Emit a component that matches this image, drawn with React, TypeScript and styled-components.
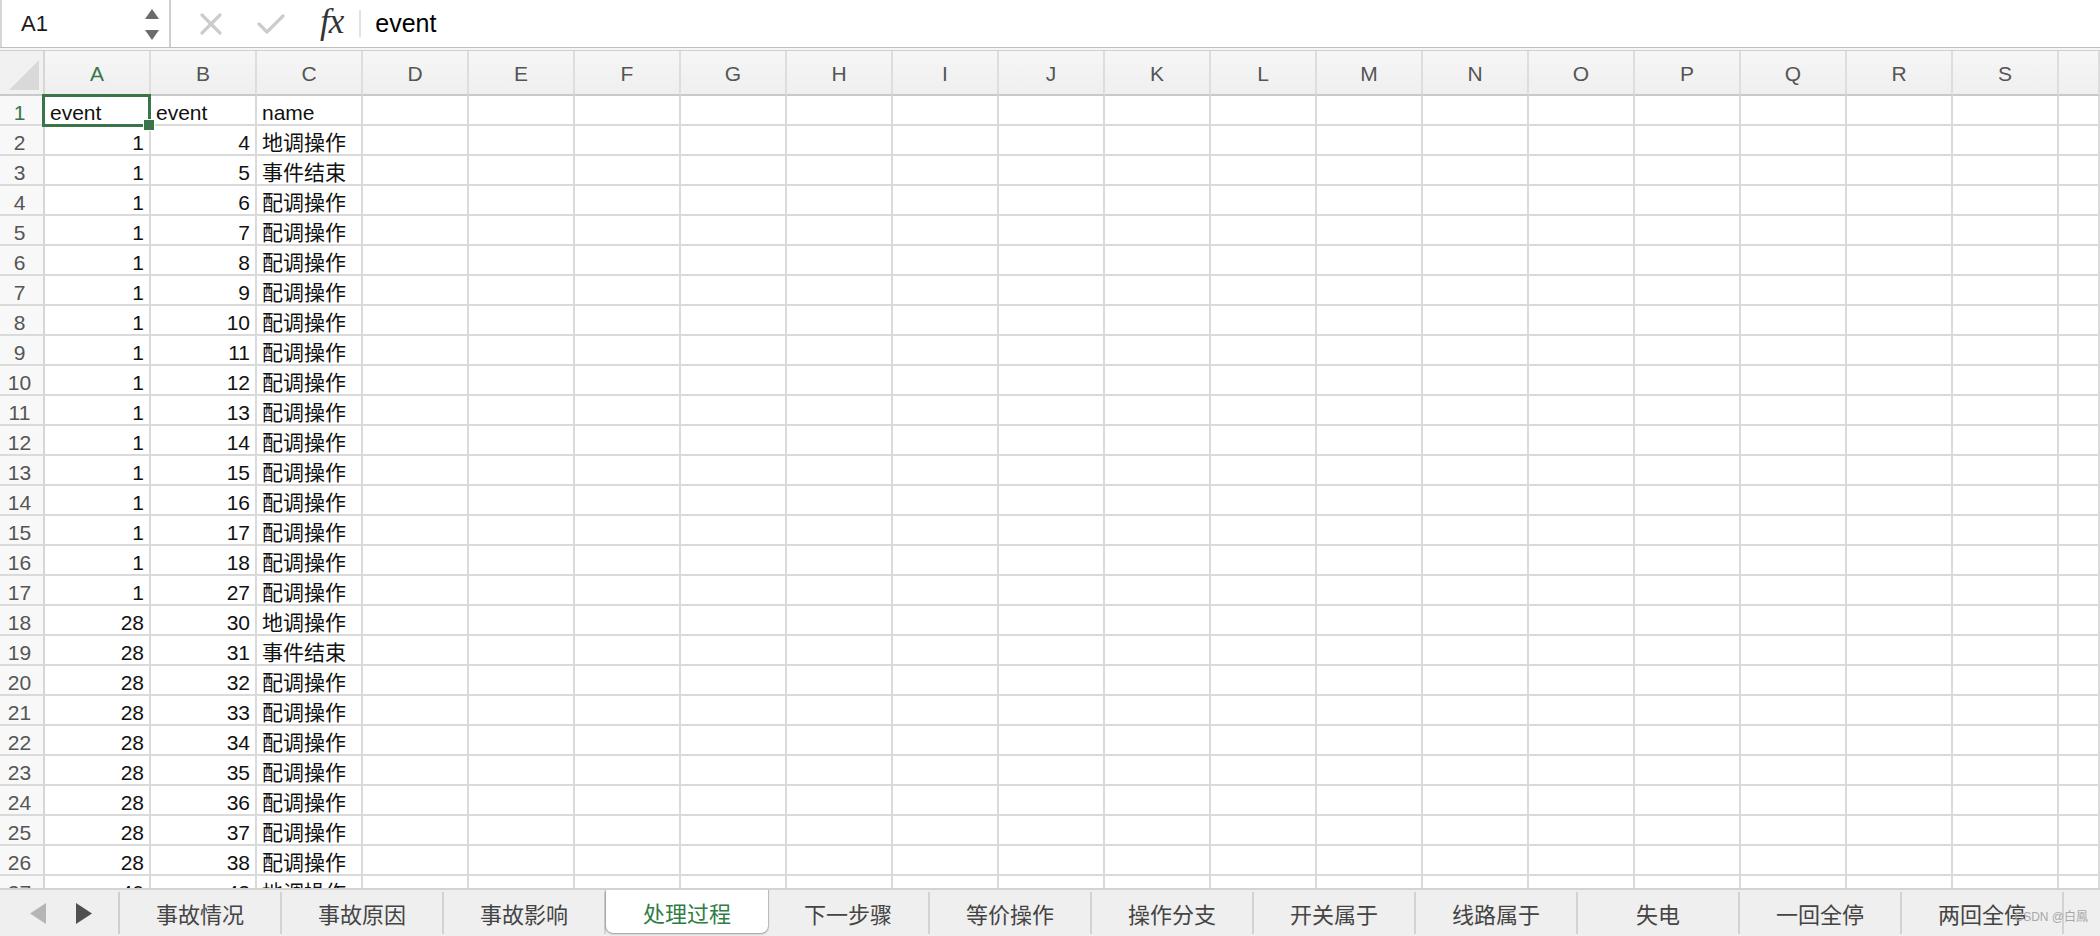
import React from 'react';
import styled, { createGlobalStyle } from 'styled-components';

const GlobalStyle = createGlobalStyle`
  html, body {
    margin: 0;
    padding: 0;
    background: #ffffff;
    overflow: hidden;
  }
  body {
    font-family: "Liberation Sans", "Noto Sans CJK SC", sans-serif;
    color: #111;
  }
`;

const GREEN = '#3a7549';
const GRID = '#dadada';

const Window = styled.div`
  display: flex;
  flex-direction: column;
  width: 2100px;
  height: 936px;
  overflow: hidden;
  position: relative;
`;

const Toolbar = styled.div`
  display: flex;
  align-items: center;
  height: 47px;
  border-bottom: 1px solid #bdbdbd;
  background: #ffffff;
  flex: none;
`;

const NameBox = styled.div`
  display: flex;
  align-items: center;
  justify-content: space-between;
  width: 171px;
  height: 100%;
  box-sizing: border-box;
  padding: 0 10px 0 19px;
  border-left: 2px solid #d6d6d6;
  border-right: 2px solid #cfcfcf;
  font-size: 22px;
  color: #1a1a1a;
`;

const Spinner = styled.div`
  display: flex;
  flex-direction: column;
  gap: 11px;
  margin-top: 2px;
`;

const FormulaIcons = styled.div`
  display: flex;
  align-items: center;
  height: 100%;
  padding-left: 29px;
  gap: 35px;
`;

const Fx = styled.span`
  font-family: "Liberation Serif", "DejaVu Serif", serif;
  font-style: italic;
  font-size: 35px;
  color: #333;
  letter-spacing: -1px;
  margin-top: -3px;
`;

const FormulaSep = styled.div`
  width: 2px;
  height: 27px;
  background: #e2e2e2;
  margin-left: 16px;
`;

const FormulaText = styled.div`
  padding-left: 14px;
  font-size: 25px;
  color: #000;
`;

const Band = styled.div`
  height: 2px;
  background: #f5f5f5;
  border-bottom: 1px solid #cfcfcf;
  flex: none;
`;

const Sheet = styled.div`
  flex: 1;
  overflow: hidden;
  display: flex;
  flex-direction: column;
`;

const Row = styled.div<{ $h: number }>`
  display: flex;
  flex: none;
  height: ${(p) => p.$h}px;
`;

const Corner = styled.div`
  width: 45px;
  flex: none;
  box-sizing: border-box;
  background: #f1f1f1;
  border-right: 2px solid #d6d6d6;
  border-bottom: 2px solid #c9c9c9;
  display: flex;
  align-items: flex-end;
  justify-content: flex-end;
  padding: 0 4px 4px 0;
`;

const ColHead = styled.div<{ $active?: boolean; $fill?: boolean }>`
  width: 106px;
  flex: ${(p) => (p.$fill ? '1' : 'none')};
  box-sizing: border-box;
  background: linear-gradient(#f6f6f6, #efefef);
  border-right: 2px solid #dddddd;
  border-bottom: 2px solid #c9c9c9;
  display: flex;
  align-items: center;
  justify-content: center;
  padding-top: 3px;
  font-size: 21px;
  color: ${(p) => (p.$active ? GREEN : '#555')};
`;

const RowHead = styled.div<{ $active?: boolean }>`
  width: 45px;
  flex: none;
  box-sizing: border-box;
  background: #f8f8f8;
  border-right: 2px solid #d6d6d6;
  border-bottom: 2px solid ${GRID};
  text-align: center;
  padding: 3px 4px 0 0;
  line-height: 28px;
  font-size: 21px;
  color: ${(p) => (p.$active ? GREEN : '#555')};
`;

const Cell = styled.div<{ $num?: boolean; $fill?: boolean }>`
  width: 106px;
  flex: ${(p) => (p.$fill ? '1' : 'none')};
  box-sizing: border-box;
  border-right: 2px solid ${GRID};
  border-bottom: 2px solid ${GRID};
  padding: 3px 5px 0 5px;
  line-height: 28px;
  font-size: 21px;
  text-align: ${(p) => (p.$num ? 'right' : 'left')};
  white-space: nowrap;
  color: #111;
`;

const SelectedCell = styled(Cell)`
  position: relative;
  &::before {
    content: '';
    position: absolute;
    left: -3px;
    top: -2px;
    right: -2px;
    bottom: -3px;
    border: 3px solid ${GREEN};
    pointer-events: none;
  }
  &::after {
    content: '';
    position: absolute;
    right: -6px;
    bottom: -7px;
    width: 10px;
    height: 10px;
    background: ${GREEN};
    border: 1px solid #fff;
  }
`;

const TabBar = styled.div`
  display: flex;
  align-items: flex-start;
  height: 48px;
  flex: none;
  box-sizing: border-box;
  background: #efefef;
  border-top: 2px solid #d3d3d3;
  overflow: hidden;
`;

const Nav = styled.div`
  display: flex;
  align-items: center;
  gap: 30px;
  width: 120px;
  height: 42px;
  margin-top: 2px;
  box-sizing: border-box;
  padding-left: 30px;
  border-right: 2px solid #cfcfcf;
  flex: none;
`;

const Tab = styled.div<{ $active?: boolean }>`
  width: 162px;
  flex: none;
  box-sizing: border-box;
  display: flex;
  align-items: center;
  justify-content: center;
  font-size: 22px;
  white-space: nowrap;
  font-family: "Noto Sans CJK SC", sans-serif;
  color: ${(p) => (p.$active ? '#2f7d45' : '#444')};
  ${(p) =>
    p.$active
      ? `
    height: 45px;
    margin-top: -2px;
    padding-top: 2px;
    background: #ffffff;
    border-radius: 0 0 7px 7px;
    box-shadow: 0 1px 2px rgba(0,0,0,0.35), 1px 0 1px rgba(0,0,0,0.15), -1px 0 1px rgba(0,0,0,0.15);
    position: relative;
    z-index: 1;
  `
      : `
    height: 42px;
    margin-top: 2px;
    border-right: 2px solid #d2d2d2;
  `}
`;

const Watermark = styled.div`
  position: absolute;
  right: 12px;
  bottom: 12px;
  font-size: 12px;
  color: #a8a8a8;
  font-family: "Liberation Sans", "Noto Sans CJK SC", sans-serif;
  z-index: 2;
`;

const LETTERS = 'ABCDEFGHIJKLMNOPQRS'.split('');

type Data = [number | string, number | string, string];

const DATA: Data[] = [
  ['event', 'event', 'name'],
  [1, 4, '地调操作'],
  [1, 5, '事件结束'],
  [1, 6, '配调操作'],
  [1, 7, '配调操作'],
  [1, 8, '配调操作'],
  [1, 9, '配调操作'],
  [1, 10, '配调操作'],
  [1, 11, '配调操作'],
  [1, 12, '配调操作'],
  [1, 13, '配调操作'],
  [1, 14, '配调操作'],
  [1, 15, '配调操作'],
  [1, 16, '配调操作'],
  [1, 17, '配调操作'],
  [1, 18, '配调操作'],
  [1, 27, '配调操作'],
  [28, 30, '地调操作'],
  [28, 31, '事件结束'],
  [28, 32, '配调操作'],
  [28, 33, '配调操作'],
  [28, 34, '配调操作'],
  [28, 35, '配调操作'],
  [28, 36, '配调操作'],
  [28, 37, '配调操作'],
  [28, 38, '配调操作'],
  [40, 42, '地调操作'],
];

const TABS = ['事故情况', '事故原因', '事故影响', '处理过程', '下一步骤', '等价操作', '操作分支', '开关属于', '线路属于', '失电', '一回全停', '两回全停'];

const Triangle: React.FC<{ up?: boolean }> = ({ up }) => (
  <svg width="14" height="10" viewBox="0 0 14 10">
    <polygon points={up ? '7,0 14,10 0,10' : '0,0 14,0 7,10'} fill="#6b6b6b" />
  </svg>
);

const CrossIcon = () => (
  <svg width="22" height="22" viewBox="0 0 22 22">
    <path d="M2 2 L20 20 M20 2 L2 20" stroke="#cccccc" strokeWidth="3.2" strokeLinecap="round" />
  </svg>
);

const CheckIcon = () => (
  <svg width="28" height="20" viewBox="0 0 28 20">
    <path d="M2 10 L10 18 L26 2" stroke="#cccccc" strokeWidth="3.2" fill="none" strokeLinecap="round" strokeLinejoin="round" />
  </svg>
);

const ArrowLeft = () => (
  <svg width="16" height="21" viewBox="0 0 16 21">
    <polygon points="16,0 16,21 0,10.5" fill="#b5b5b5" />
  </svg>
);

const ArrowRight = () => (
  <svg width="16" height="21" viewBox="0 0 16 21">
    <polygon points="0,0 0,21 16,10.5" fill="#505050" />
  </svg>
);

const CornerTriangle = () => (
  <svg width="30" height="30" viewBox="0 0 30 30">
    <polygon points="30,0 30,30 0,30" fill="#d9d9d9" />
  </svg>
);

const App: React.FC = () => (
  <Window>
    <GlobalStyle />
    <Toolbar>
      <NameBox>
        <span>A1</span>
        <Spinner>
          <Triangle up />
          <Triangle />
        </Spinner>
      </NameBox>
      <FormulaIcons>
        <CrossIcon />
        <CheckIcon />
        <Fx>fx</Fx>
      </FormulaIcons>
      <FormulaSep />
      <FormulaText>event</FormulaText>
    </Toolbar>
    <Band />
    <Sheet>
      <Row $h={45}>
        <Corner>
          <CornerTriangle />
        </Corner>
        {LETTERS.map((l, i) => (
          <ColHead key={l} $active={i === 0}>
            {l}
          </ColHead>
        ))}
        <ColHead $fill />
      </Row>
      {DATA.map((r, i) => (
        <Row $h={30} key={i}>
          <RowHead $active={i === 0}>{i + 1}</RowHead>
          {r.map((v, j) => {
            const num = typeof v === 'number';
            if (i === 0 && j === 0) {
              return <SelectedCell key={j}>{v}</SelectedCell>;
            }
            return (
              <Cell key={j} $num={num}>
                {v}
              </Cell>
            );
          })}
          {LETTERS.slice(3).map((l) => (
            <Cell key={l} />
          ))}
          <Cell $fill />
        </Row>
      ))}
    </Sheet>
    <TabBar>
      <Nav>
        <ArrowLeft />
        <ArrowRight />
      </Nav>
      {TABS.map((t, i) => (
        <Tab key={t} $active={i === 3}>
          {t}
        </Tab>
      ))}
    </TabBar>
    <Watermark>CSDN @白鳳</Watermark>
  </Window>
);

export default App;
